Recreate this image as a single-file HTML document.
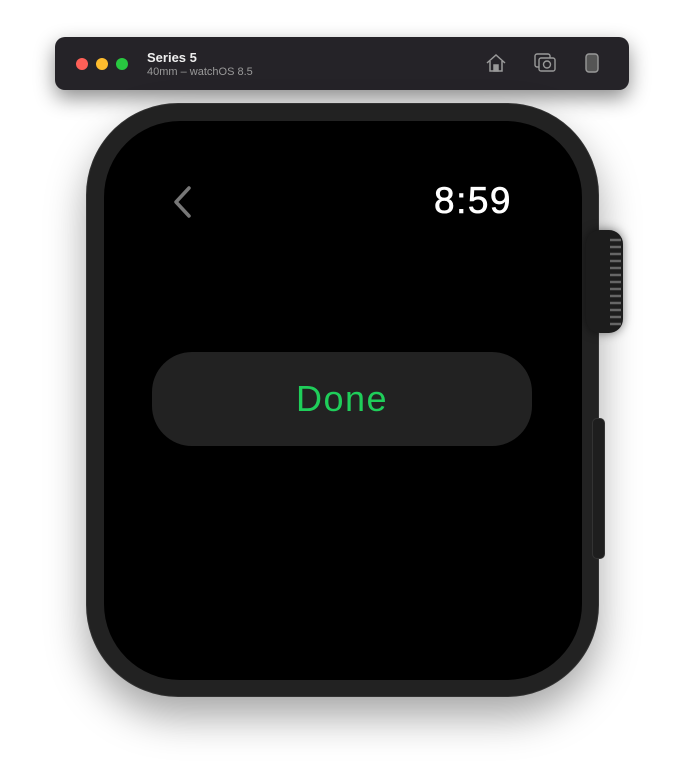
<!DOCTYPE html>
<html><head><style>
body{margin:0;width:685px;height:773px;background:#fff;position:relative;overflow:hidden;font-family:"Liberation Sans",sans-serif}
.bar{position:absolute;left:55px;top:37px;width:574px;height:53px;background:#252328;border-radius:10px;box-shadow:0 8px 20px rgba(0,0,0,.45)}
.dot{position:absolute;top:21px;width:12px;height:12px;border-radius:50%}
.t1{position:absolute;left:92px;top:13px;color:#eee;font-weight:bold;font-size:13px}
.t2{position:absolute;left:92px;top:29px;color:#999;font-size:11px}
.body{position:absolute;left:86px;top:103px;width:513px;height:594px;border-radius:92px;background:#222;box-shadow:0 20px 40px rgba(0,0,0,.35);border:1px solid #333;box-sizing:border-box}
.screen{position:absolute;left:104px;top:121px;width:478px;height:559px;border-radius:76px;background:#000}
.crown{position:absolute;left:586px;top:230px;width:37px;height:103px;border-radius:14px;background:#1c1c1c;box-shadow:0 0 10px rgba(0,0,0,.5)}
.side{position:absolute;left:592px;top:418px;width:11px;height:139px;border-radius:5px;background:#1e1e1e;border:1px solid #333}
.btn{position:absolute;left:152px;top:352px;width:380px;height:94px;border-radius:40px;background:#222;color:#1fce5a;font-size:36px;text-align:center;line-height:94px;letter-spacing:1.5px}
.time{position:absolute;left:434px;top:180px;color:#fff;font-size:37px;letter-spacing:1.5px;-webkit-text-stroke:0.6px #fff}
</style></head><body>
<div class="bar">
<div class="dot" style="left:21px;background:#fe5f57"></div>
<div class="dot" style="left:41px;background:#febc2e"></div>
<div class="dot" style="left:61px;background:#28c840"></div>
<div class="t1">Series 5</div><div class="t2">40mm – watchOS 8.5</div>
<svg style="position:absolute;left:430px;top:15px" width="22" height="22" viewBox="0 0 22 22" fill="none" stroke="#999" stroke-width="1.5"><path d="M2 11L11 3l9 8M5 9v10h12V9"/><rect x="9" y="13" width="4" height="6" fill="#999"/></svg>
<svg style="position:absolute;left:479px;top:15px" width="22" height="22" viewBox="0 0 22 22" fill="none" stroke="#999" stroke-width="1.4"><rect x="1" y="2" width="15" height="13" rx="2"/><rect x="5" y="6" width="16" height="13" rx="2" fill="#252328"/><circle cx="13" cy="12.5" r="3.5"/></svg>
<svg style="position:absolute;left:529px;top:15px" width="16" height="22" viewBox="0 0 16 22"><rect x="2" y="2" width="12" height="18" rx="3" fill="#555" stroke="#999" stroke-width="1.4"/></svg>
</div>
<div class="body"></div>
<div class="crown"><svg width="37" height="103" style="position:absolute;left:0;top:0"><g stroke="#666" stroke-width="2.5">
<line x1="24" y1="10" x2="35" y2="10"/><line x1="24" y1="17" x2="35" y2="17"/><line x1="24" y1="24" x2="35" y2="24"/><line x1="24" y1="31" x2="35" y2="31"/><line x1="24" y1="38" x2="35" y2="38"/><line x1="24" y1="45" x2="35" y2="45"/><line x1="24" y1="52" x2="35" y2="52"/><line x1="24" y1="59" x2="35" y2="59"/><line x1="24" y1="66" x2="35" y2="66"/><line x1="24" y1="73" x2="35" y2="73"/><line x1="24" y1="80" x2="35" y2="80"/><line x1="24" y1="87" x2="35" y2="87"/><line x1="24" y1="94" x2="35" y2="94"/></g></svg></div>
<div class="side"></div>
<div class="screen"></div>
<svg style="position:absolute;left:170px;top:185px" width="24" height="34" viewBox="0 0 24 34"><path d="M19 3L6 17l13 14" fill="none" stroke="#777" stroke-width="3.5" stroke-linecap="round" stroke-linejoin="round"/></svg>
<div class="time">8:59</div>
<div class="btn">Done</div>
</body></html>
